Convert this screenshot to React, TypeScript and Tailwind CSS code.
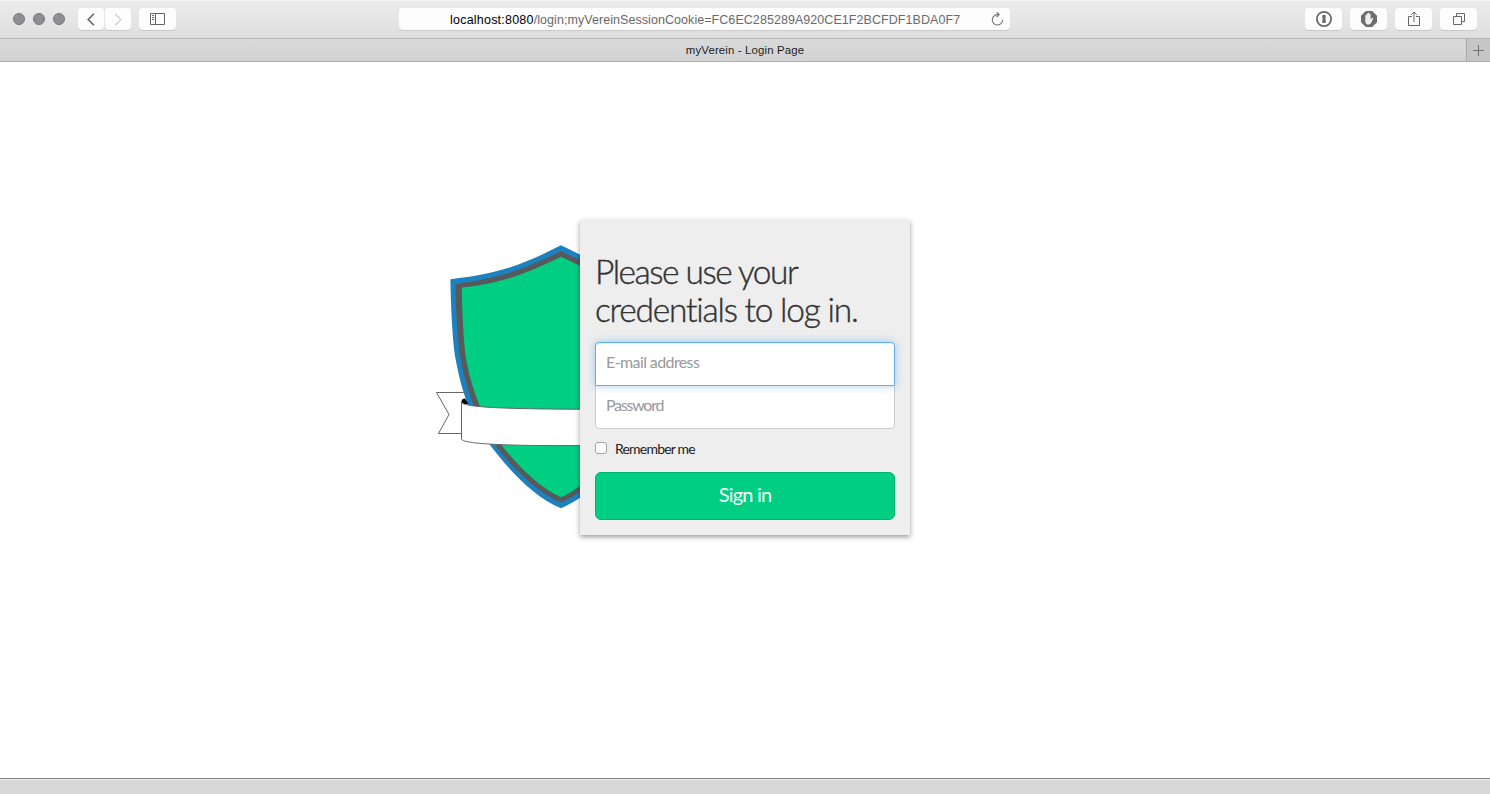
import type { ReactNode } from "react";

function ToolButton({ children, className = "w-[37px]" }: { children: ReactNode; className?: string }) {
  return (
    <button
      className={`flex h-[22px] items-center justify-center rounded-[4px] bg-[#fdfdfd] text-[#6b6b6b] shadow-[0_1px_0_#c8c8c8] ${className}`}
    >
      {children}
    </button>
  );
}

function Toolbar() {
  return (
    <header className="flex h-[39px] shrink-0 border-b border-[#b4b4b4] bg-linear-to-b from-[#ececec] to-[#dedede] pt-2 shadow-[inset_0_1px_0_#f6f6f6]">
      <div className="flex w-[399px] items-start">
        <div className="flex h-[22px] items-center gap-2 pl-[13px]">
          <span className="size-3 rounded-full border border-[#77767a] bg-[#8e8d92]" />
          <span className="size-3 rounded-full border border-[#77767a] bg-[#8e8d92]" />
          <span className="size-3 rounded-full border border-[#77767a] bg-[#8e8d92]" />
        </div>
        <div className="ml-[13px] flex gap-px">
          <ToolButton className="w-[26px]">
            <svg width="8" height="13" viewBox="0 0 8 13" fill="none" stroke="#666" strokeWidth="1.6">
              <path d="M6.9 .7 1.2 6.5l5.7 5.8" />
            </svg>
          </ToolButton>
          <ToolButton className="w-[26px]">
            <svg width="8" height="13" viewBox="0 0 8 13" fill="none" stroke="#d2d2d2" strokeWidth="1.4">
              <path d="m1.1 .7 5.7 5.8-5.7 5.8" />
            </svg>
          </ToolButton>
        </div>
        <div className="ml-2">
          <ToolButton>
            <svg width="15" height="12" viewBox="0 0 15 12" fill="none" stroke="#666">
              <path d="M.5 .5h14v11H.5zM5.5 .5v11M2 2.5h2M2 4.5h2M2 6.5h2" />
            </svg>
          </ToolButton>
        </div>
      </div>
      <div className="flex h-[22px] w-[611px] items-center rounded-[4px] bg-[#fdfdfd] pr-[6px] pl-[51px] shadow-[0_1px_0_#c8c8c8]">
        <span className="grow pt-px text-[12.5px] leading-[22px] tracking-[0.06px] whitespace-nowrap text-[#6a6a6a]">
          <span className="tracking-[0.22px] text-black">localhost:8080</span>
          /login;myVereinSessionCookie=FC6EC285289A920CE1F2BCFDF1BDA0F7
        </span>
        <svg width="13" height="14" viewBox="0 0 13 14" fill="none" stroke="#777" strokeWidth="1.1">
          <path d="M7.500 2.600H6.200a5.200 5.200 0 1 0 5.500 5.200M5.600 0l2.600 2.600-2.600 2.400" />
        </svg>
      </div>
      <div className="flex grow justify-end gap-2 pr-[13px]">
        <ToolButton>
          <svg width="16" height="16" viewBox="0 0 16 16">
            <circle cx="8" cy="8" r="7.1" fill="#fff" stroke="#6b6b6b" strokeWidth="1.8" />
            <path d="M6.300 4h3.400v3l-.6.7.6.8V12H6.300V9l.7-.8-.7-.8z" fill="#6b6b6b" />
          </svg>
        </ToolButton>
        <ToolButton>
          <svg width="16" height="16" viewBox="0 0 16 16">
            <path d="M4.800 0h6.400L16 4.800v6.400L11.200 16H4.800L0 11.200V4.800z" fill="#6d6d6d" />
            <path
              d="M4.300 8.200V4.500q.6-.8 1.200 0V2.800q.6-.8 1.300 0V2q.7-.8 1.400 0v1q.7-.8 1.400 0v5.200l1.700-1.400q1-.3.9.6L10 12.300q-.9 1.200-2.500 1.200-3.200 0-3.200-3.600z"
              fill="#eee"
            />
          </svg>
        </ToolButton>
        <ToolButton>
          <svg width="12" height="16" viewBox="0 0 12 16" fill="none" stroke="#666">
            <path d="M4 5.500H.5v9h11v-9H8M6 11V1M3.200 3.800 6 1l2.800 2.800" />
          </svg>
        </ToolButton>
        <ToolButton>
          <svg width="12" height="12" viewBox="0 0 12 12" fill="none" stroke="#666">
            <path d="M.5 3.500h8v8h-8zM3.500 3V.5h8v8H9" />
          </svg>
        </ToolButton>
      </div>
    </header>
  );
}

function TabBar() {
  return (
    <div className="flex h-[23px] shrink-0 border-b border-[#adadad] bg-linear-to-b from-[#dadada] to-[#d2d2d2]">
      <div className="w-6" />
      <div className="grow text-center text-[11.4px] leading-[22px] text-[#1c1c1c]">
        <span className="tracking-[0.150px]">myVerein - Login Page</span>
      </div>
      <button className="flex w-6 items-center justify-center border-l border-[#a9a9a9] bg-[#c6c6c6]">
        <svg width="11" height="11" viewBox="0 0 11 11" stroke="#707070">
          <path d="M5.500 0v11M0 5.500h11" />
        </svg>
      </button>
    </div>
  );
}

function Shield() {
  return (
    <svg
      className="absolute top-[20px] left-[-150px]"
      width="262"
      height="275"
      viewBox="430 240 262 275"
      aria-hidden="true"
    >
      <path
        d="M561 245.3C526 263 500 274 450.4 279.2C450.8 308 452.500 338 455 356C463 400 474 423 490 445C509 470 534 497 561 508.3C588 497 613 470 632 445C648 423 659 400 667 356C669.500 338 671.2 308 671.6 279.2C622 274 596 263 561 245.3Z"
        fill="#1b82bf"
      />
      <path
        d="M561 251C526 268.500 500 278.500 455.500 284C455.800 310 457.500 338 460 356C468 398 479 422 495 445C513 468 536 492 561 502.500C586 492 609 468 627 445C643 422 654 398 662 356C664.500 338 666.200 310 666.500 284C622 278.500 596 268.500 561 251Z"
        fill="#58595b"
      />
      <path
        d="M561 256.800C527 273.500 502 283 461.800 287.600C462 312 463.500 338 465.500 356C472.500 396 485 420 501.500 445C517 465 538 487 561 497.300C584 487 605 465 620.500 445C637 420 649.500 396 656.500 356C658.500 338 660 312 660.200 287.600C620 283 595 273.500 561 256.800Z"
        fill="#00ce82"
      />
      <g stroke="#666" strokeWidth="1">
        <path d="M465 392.500H436.500L449 414.500L438.500 433.500H463" fill="none" />
        <path d="M461.500 404V401Q462 398.500 465 398.500L468.500 404Z" fill="#000" stroke="none" />
        <path
          d="M461.500 402C462 406.500 492 409 580 409.200H662V445.600H560C500 445.600 462 443.500 461.500 439Z"
          fill="#fff"
        />
      </g>
    </svg>
  );
}

function LoginCard() {
  return (
    <form className="relative flex h-[315px] w-[330px] flex-col bg-[#eee] px-[15px] pt-[33px] font-[Lato,sans-serif] shadow-[0_2px_5px_rgba(0,0,0,0.4)]">
      <h1 className="h-[89px] text-[33.500px] leading-[37.500px] font-light whitespace-nowrap text-[#333] [-webkit-text-stroke:0.4px_#333]">
        <span className="tracking-[-1.500px]">Please use your</span>
        <br />
        <span className="tracking-[-1.220px]">credentials to log in.</span>
      </h1>
      <input
        type="email"
        placeholder="E-mail address"
        className="relative z-10 h-11 w-full rounded-t-[4px] border border-[#66afe9] bg-white px-[10px] pb-[5px] text-[16px] tracking-[-0.600px] outline-none placeholder:text-[#999] shadow-[inset_0_1px_1px_rgba(0,0,0,0.075),0_0_8px_rgba(102,175,233,0.6)]"
      />
      <input
        type="password"
        placeholder="Password"
        className="-mt-px h-11 w-full rounded-b-[4px] border border-[#ccc] bg-white px-[10px] pb-[5px] text-[16px] tracking-[-1.250px] outline-none placeholder:text-[#999]"
      />
      <label className="mt-[9px] flex h-5 items-center gap-2 text-[14px] tracking-[-0.8px] text-[#222]">
        <input type="checkbox" className="mb-px size-3 appearance-none rounded-[3px] border border-[#a4a4a4] bg-white" />
        <span>Remember me</span>
      </label>
      <button
        type="button"
        className="mt-[14px] h-12 w-full rounded-[6px] border border-[#00b572] bg-[#00ce82] pb-[5px] text-[20px] tracking-[-0.8px] text-white"
      >
        Sign in
      </button>
    </form>
  );
}

export default function App() {
  return (
    <div className="flex h-[794px] w-full flex-col overflow-hidden bg-white font-['Liberation_Sans',Arial,sans-serif]">
      <Toolbar />
      <TabBar />
      <main className="flex grow items-start justify-center pt-[158px]">
        <div className="relative">
          <Shield />
          <LoginCard />
        </div>
      </main>
      <footer className="h-4 shrink-0 border-t border-[#858585] bg-[#d7d7d7] shadow-[inset_0_1px_0_#ececec]" />
    </div>
  );
}
